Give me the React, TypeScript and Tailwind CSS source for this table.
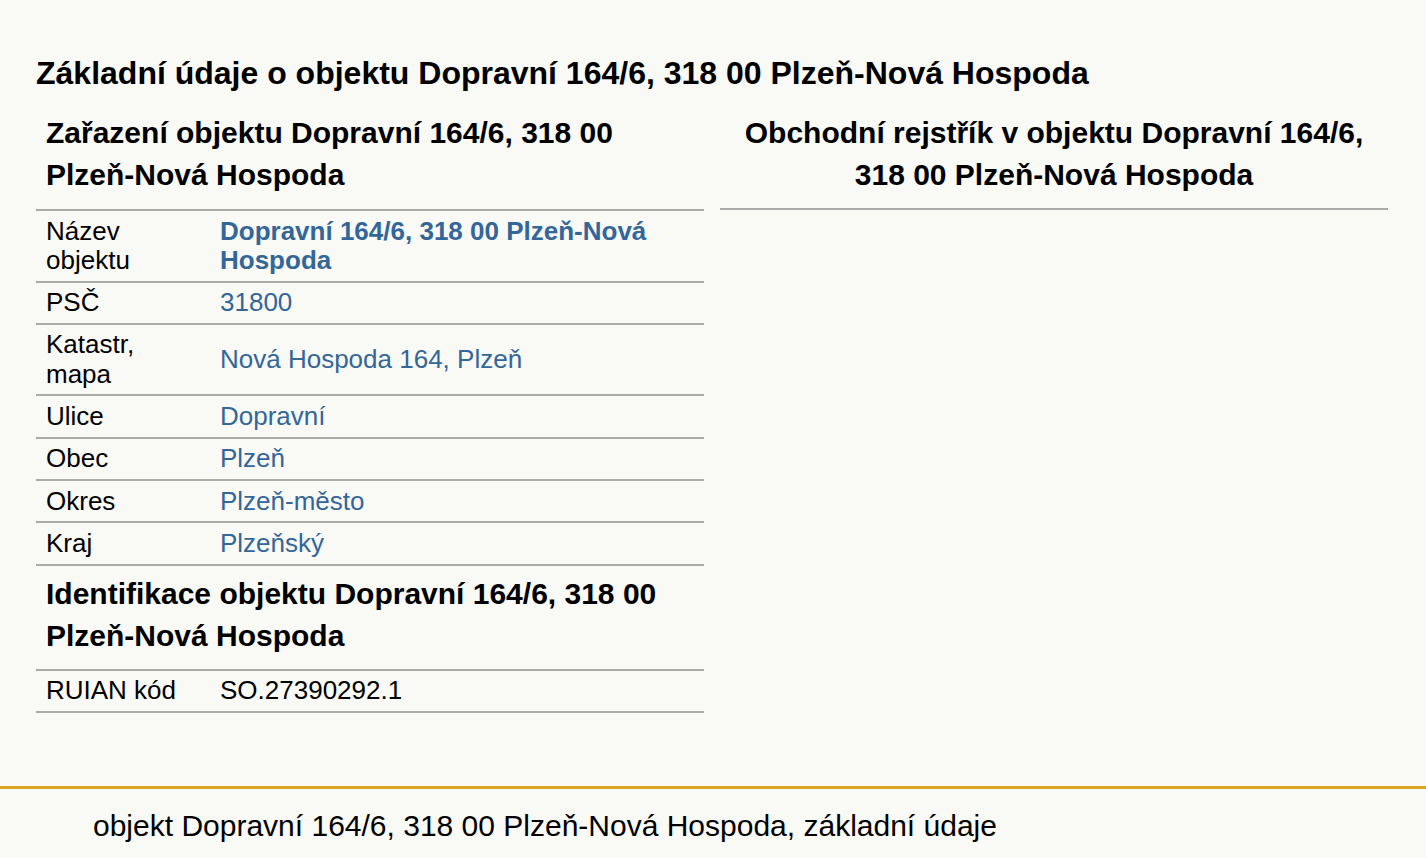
const rows: { label: string; value: string; strong?: boolean; plain?: boolean }[] = [
  { label: 'Název objektu', value: 'Dopravní 164/6, 318 00 Plzeň-Nová Hospoda', strong: true },
  { label: 'PSČ', value: '31800' },
  { label: 'Katastr, mapa', value: 'Nová Hospoda 164, Plzeň' },
  { label: 'Ulice', value: 'Dopravní' },
  { label: 'Obec', value: 'Plzeň' },
  { label: 'Okres', value: 'Plzeň-město' },
  { label: 'Kraj', value: 'Plzeňský' },
];

const InfoTable = ({ items }: { items: typeof rows }) => (
  <table className="w-full border-collapse border-t-2 border-[#aaaaaa] text-[26px] leading-[29.3px]">
    <tbody>
      {items.map((row) => (
        <tr key={row.label} className="border-b-2 border-[#aaaaaa]">
          <td className="w-[174px] py-[5.5px] pl-[10px] pr-[10px] align-middle text-black">{row.label}</td>
          <td
            className={`py-[5.5px] pl-[10px] pr-[10px] align-middle ${
              row.plain ? 'text-black' : 'text-[#336699]'
            } ${row.strong ? 'font-bold' : ''}`}
          >
            {row.value}
          </td>
        </tr>
      ))}
    </tbody>
  </table>
);

export default function App() {
  return (
    <div
      className="min-h-[858px] bg-[#f9f9f6] text-black"
      style={{ fontFamily: '"Liberation Sans", Arial, sans-serif' }}
    >
      <main className="pl-[36px] pr-[38px] pt-[52px]">
        <h1 className="text-[32px] font-bold leading-[42px]">
          Základní údaje o objektu Dopravní 164/6, 318 00 Plzeň-Nová Hospoda
        </h1>
        <div className="mt-[11px] grid grid-cols-2 gap-4">
          <section>
            <h2 className="px-[10px] pt-[7px] pb-[13px] text-[30px] font-bold leading-[42px]">
              Zařazení objektu Dopravní 164/6, 318 00 Plzeň-Nová Hospoda
            </h2>
            <InfoTable items={rows} />
            <h2 className="px-[10px] pt-[7px] pb-[12px] text-[30px] font-bold leading-[42px]">
              Identifikace objektu Dopravní 164/6, 318 00 Plzeň-Nová Hospoda
            </h2>
            <InfoTable items={[{ label: 'RUIAN kód', value: 'SO.27390292.1', plain: true }]} />
          </section>
          <section>
            <h2 className="border-b-2 border-[#aaaaaa] px-[10px] pt-[7px] pb-[12px] text-center text-[30px] font-bold leading-[42px]">
              Obchodní rejstřík v objektu Dopravní 164/6, 318 00 Plzeň-Nová Hospoda
            </h2>
          </section>
        </div>
      </main>
      <footer className="mt-[73px] border-t-[3px] border-[#daa520] pl-[93px] pt-[16px]">
        <p className="text-[30px] leading-[42px]">objekt Dopravní 164/6, 318 00 Plzeň-Nová Hospoda, základní údaje</p>
      </footer>
    </div>
  );
}
